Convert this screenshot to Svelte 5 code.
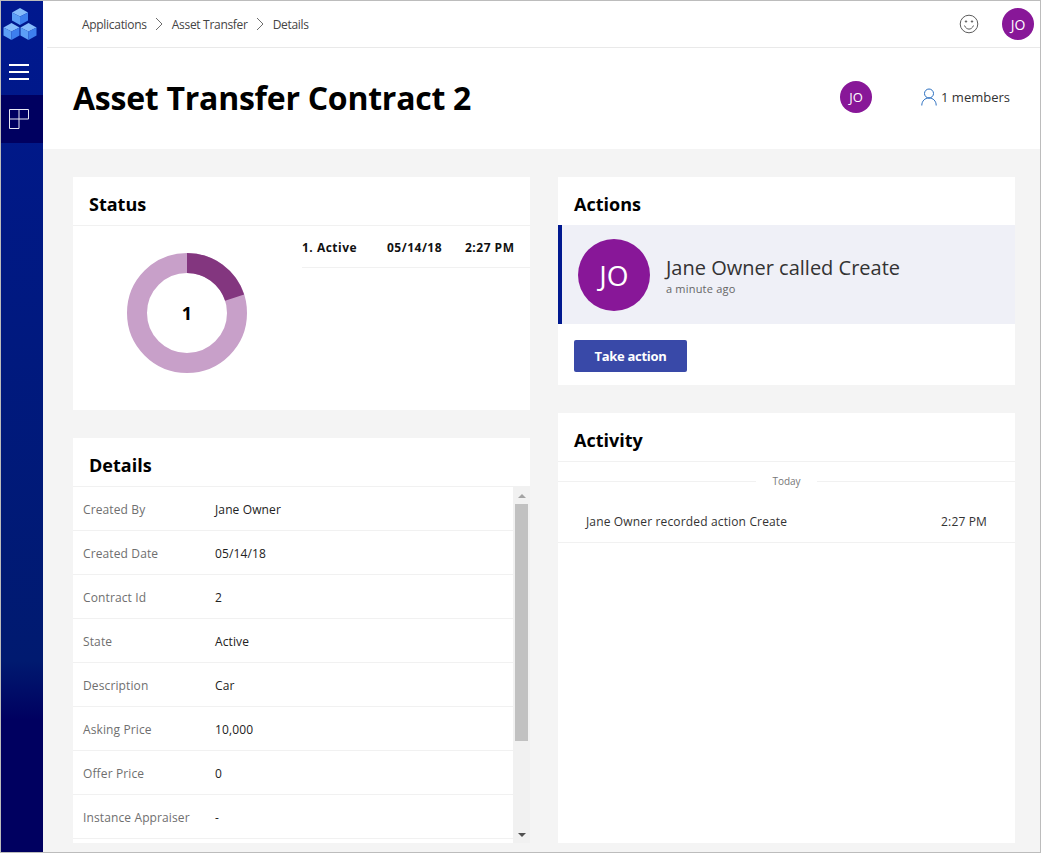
<script>
  const crumbs = ['Applications', 'Asset Transfer', 'Details'];
  const details = [
    ['Created By', 'Jane Owner'],
    ['Created Date', '05/14/18'],
    ['Contract Id', '2'],
    ['State', 'Active'],
    ['Description', 'Car'],
    ['Asking Price', '10,000'],
    ['Offer Price', '0'],
    ['Instance Appraiser', '-']
  ];
  const cubes = [[19, 15.5], [10.5, 30.5], [27.5, 30.5]];
</script>

<div class="window">
  <nav class="rail">
    <div class="logo">
      <svg viewBox="0 0 41 47" width="41" height="47">
        {#each cubes as [x, y]}
          <polygon points="{x},{y - 8.5} {x + 8},{y - 4} {x},{y} {x - 8},{y - 4}" fill="#86bcfb" />
          <polygon points="{x - 8},{y - 4} {x},{y} {x},{y + 8.5} {x - 8},{y + 4}" fill="#5c9ff6" />
          <polygon points="{x + 8},{y - 4} {x},{y} {x},{y + 8.5} {x + 8},{y + 4}" fill="#3d7fee" />
        {/each}
      </svg>
    </div>
    <div class="rail-btn">
      <svg viewBox="0 0 20 16" width="20" height="16" fill="none" stroke="#fff" stroke-width="2">
        <path d="M0 1h20M0 8h20M0 15h20" />
      </svg>
    </div>
    <div class="rail-btn active">
      <svg viewBox="0 0 20 20" width="20" height="20" fill="none" stroke="#e8e8f4" stroke-width="1">
        <path d="M.5.5h19v9.500H.5zM10 .5V19.500H.5V10" />
      </svg>
    </div>
  </nav>

  <div class="page">
    <header class="topbar">
      <div class="crumbs">
        {#each crumbs as crumb, i}
          <span>{crumb}</span>
          {#if i < crumbs.length - 1}
            <svg viewBox="0 0 8 14" width="8" height="14" fill="none" stroke="#6d6d6d" stroke-width="1"><path d="M1 1l6 6-6 6" /></svg>
          {/if}
        {/each}
      </div>
      <svg class="smiley" viewBox="0 0 20 20" width="20" height="20" fill="none" stroke="#5c5c5c" stroke-width="1">
        <circle cx="10" cy="10" r="8.800" />
        <circle cx="7" cy="7.500" r=".7" fill="#5c5c5c" />
        <circle cx="13" cy="7.500" r=".7" fill="#5c5c5c" />
        <path d="M5.500 11.500c1 2.600 3 3.600 4.500 3.600s3.500-1 4.500-3.600" />
      </svg>
      <div class="avatar small">JO</div>
    </header>

    <section class="title-row">
      <h1>Asset Transfer Contract 2</h1>
      <div class="avatar small">JO</div>
      <div class="members">
        <svg viewBox="0 0 16 18" width="16" height="18" fill="none" stroke="#2b6fc0" stroke-width="1">
          <circle cx="8" cy="5.500" r="4.500" />
          <path d="M.8 17.500c0-4.500 3-7.500 7.200-7.500s7.200 3 7.200 7.500" />
        </svg>
        <span>1 members</span>
      </div>
    </section>

    <main class="content">
      <div class="column">
        <section class="card status">
          <h2>Status</h2>
          <div class="status-body">
            <div class="donut">
              <svg viewBox="0 0 120 120" width="120" height="120">
                <circle cx="60" cy="60" r="50" fill="none" stroke="#c8a0c9" stroke-width="20" />
                <circle cx="60" cy="60" r="50" fill="none" stroke="#83367f" stroke-width="20"
                  stroke-dasharray="62.8 314.2" transform="rotate(-90 60 60)" />
              </svg>
              <span>1</span>
            </div>
            <div class="state-row">
              <span class="state-name">1. Active</span>
              <span class="state-date">05/14/18</span>
              <span>2:27 PM</span>
            </div>
          </div>
        </section>

        <section class="card details">
          <h2>Details</h2>
          <div class="details-body">
            <div class="rows">
              {#each details as [label, value]}
                <div class="row">
                  <span class="label">{label}</span>
                  <span class="value">{value}</span>
                </div>
              {/each}
            </div>
            <div class="scrollbar">
              <div class="arrow-box"><i class="arrow up"></i></div>
              <div class="track"><div class="thumb"></div></div>
              <div class="arrow-box"><i class="arrow down"></i></div>
            </div>
          </div>
        </section>
      </div>

      <div class="column">
        <section class="card actions">
          <h2>Actions</h2>
          <div class="action">
            <div class="avatar large">JO</div>
            <div class="action-text">
              <div class="action-title">Jane Owner called Create</div>
              <div class="action-time">a minute ago</div>
            </div>
          </div>
          <button class="take">Take action</button>
        </section>

        <section class="card activity">
          <h2>Activity</h2>
          <div class="divider"><span>Today</span></div>
          <div class="event">
            <span>Jane Owner recorded action Create</span>
            <span>2:27 PM</span>
          </div>
        </section>
      </div>
    </main>
  </div>
</div>

<style>
  :global(body) {
    margin: 0;
  }

  .window {
    box-sizing: border-box;
    display: flex;
    width: 1041px;
    height: 853px;
    overflow: hidden;
    border: 1px solid #bcbcbc;
    font-family: "Open Sans", "Noto Sans", sans-serif;
    color: #222;
    background: #fff;
  }

  .rail {
    flex: 0 0 42px;
    background: linear-gradient(#00188f 0, #001a70 77.5%, #000060 84.5%);
  }

  .logo {
    height: 47px;
  }

  .logo svg {
    display: block;
  }

  .rail-btn {
    display: flex;
    align-items: center;
    justify-content: center;
    height: 47px;
    padding-right: 6px;
  }

  .rail-btn.active {
    height: 48px;
    background: #000060;
  }

  .page {
    flex: 1;
    display: flex;
    flex-direction: column;
    min-width: 0;
  }

  .topbar {
    display: flex;
    align-items: center;
    height: 46px;
    margin-left: 4px;
    padding: 0 6px 0 35px;
    border-bottom: 1px solid #e9e9e9;
  }

  .topbar .avatar.small {
    font-size: 14px;
  }

  .crumbs {
    flex: 1;
    display: flex;
    align-items: center;
    gap: 8.5px;
    font-size: 12px;
    letter-spacing: -0.3px;
    color: #444;
  }

  .smiley {
    margin-right: 23px;
  }

  .avatar {
    display: flex;
    align-items: center;
    justify-content: center;
    flex: none;
    border-radius: 50%;
    background: #881798;
    color: #fff;
  }

  .avatar.small {
    width: 32px;
    height: 32px;
    font-size: 13px;
  }

  .avatar.large {
    width: 72px;
    height: 72px;
    font-size: 28px;
  }

  .title-row {
    box-sizing: border-box;
    display: flex;
    align-items: center;
    height: 101px;
    padding: 0 30px 4px;
  }

  h1 {
    flex: 1;
    margin: 0;
    padding-top: 2px;
    font-size: 32px;
    letter-spacing: -0.25px;
    font-weight: 700;
    color: #000;
  }

  .members {
    display: flex;
    align-items: center;
    gap: 4px;
    margin-left: 49px;
    font-size: 13px;
    color: #333;
  }

  .content {
    flex: 1;
    display: grid;
    grid-template-columns: 1fr 1fr;
    gap: 28px;
    min-height: 0;
    padding: 28px 25px 9px 30px;
    background: #f4f4f4;
  }

  .column {
    display: flex;
    flex-direction: column;
    gap: 28px;
    min-height: 0;
  }

  .card {
    background: #fff;
  }

  h2 {
    box-sizing: border-box;
    height: 49px;
    margin: 0;
    padding: 0 16px;
    border-bottom: 1px solid #f1f1f1;
    font-size: 18px;
    line-height: 54px;
    font-weight: 700;
    color: #000;
  }

  .status {
    height: 233px;
  }

  .status-body {
    display: flex;
    align-items: flex-start;
  }

  .donut {
    position: relative;
    width: 120px;
    height: 120px;
    margin: 27px 55px 0 54px;
  }

  .donut svg {
    display: block;
  }

  .donut span {
    position: absolute;
    inset: 0;
    display: flex;
    align-items: center;
    justify-content: center;
    font-size: 18px;
    font-weight: 700;
    color: #000;
  }

  .state-row {
    box-sizing: border-box;
    flex: 1;
    display: flex;
    align-items: center;
    height: 42px;
    padding-top: 1px;
    border-bottom: 1px solid #f1f1f1;
    font-size: 12px;
    letter-spacing: 0.5px;
    font-weight: 700;
    color: #111;
  }

  .state-name {
    width: 85px;
  }

  .state-date {
    width: 78px;
  }

  .details {
    flex: 1;
    min-height: 0;
    overflow: hidden;
  }

  .details-body {
    display: flex;
    height: 356px;
  }

  .rows {
    flex: 1;
    overflow: hidden;
  }

  .row {
    box-sizing: border-box;
    display: flex;
    align-items: center;
    height: 44px;
    padding: 1px 0 0 10px;
    border-bottom: 1px solid #f1f1f1;
    font-size: 12px;
    letter-spacing: 0.12px;
  }

  .label {
    width: 132px;
    color: #6f6f6f;
  }

  .value {
    color: #222;
  }

  .scrollbar {
    flex: 0 0 17px;
    display: flex;
    flex-direction: column;
    background: #f1f1f1;
  }

  .arrow-box {
    flex: 0 0 17px;
    display: flex;
    align-items: center;
    justify-content: center;
  }

  .track {
    flex: 1;
    padding: 0 2px;
  }

  .thumb {
    height: 237px;
    background: #c1c1c1;
  }

  .arrow {
    width: 0;
    height: 0;
    border-left: 4px solid transparent;
    border-right: 4px solid transparent;
  }

  .arrow.up {
    border-bottom: 4px solid #a3a3a3;
  }

  .arrow.down {
    border-top: 4px solid #505050;
  }

  .actions {
    height: 208px;
  }

  .actions h2 {
    border-bottom: 0;
    height: 48px;
  }

  .action {
    display: flex;
    align-items: center;
    gap: 16px;
    height: 99px;
    padding-left: 16px;
    border-left: 4px solid #00188f;
    background: #eff0f7;
  }

  .action-text {
    padding-top: 2px;
  }

  .action-title {
    font-size: 20px;
    line-height: 26px;
    color: #333;
  }

  .action-time {
    margin-top: 1px;
    font-size: 11px;
    line-height: 14px;
    letter-spacing: 0.2px;
    color: #666;
  }

  .take {
    display: block;
    width: 113px;
    height: 32px;
    margin: 16px 0 0 16px;
    border: 0;
    border-radius: 2px;
    background: #3949a8;
    color: #fff;
    font: 700 13px "Open Sans", "Noto Sans", sans-serif;
    letter-spacing: -0.3px;
  }

  .activity {
    flex: 1;
  }

  .divider {
    display: flex;
    align-items: center;
    justify-content: center;
    height: 38px;
    background: linear-gradient(#f1f1f1, #f1f1f1) center / 100% 1px no-repeat;
  }

  .divider span {
    padding: 0 16px;
    background: #fff;
    font-size: 10px;
    color: #777;
  }

  .event {
    box-sizing: border-box;
    display: flex;
    justify-content: space-between;
    align-items: center;
    height: 43px;
    padding: 0 28px;
    border-bottom: 1px solid #f1f1f1;
    font-size: 12px;
    letter-spacing: 0.15px;
    color: #333;
  }
</style>
